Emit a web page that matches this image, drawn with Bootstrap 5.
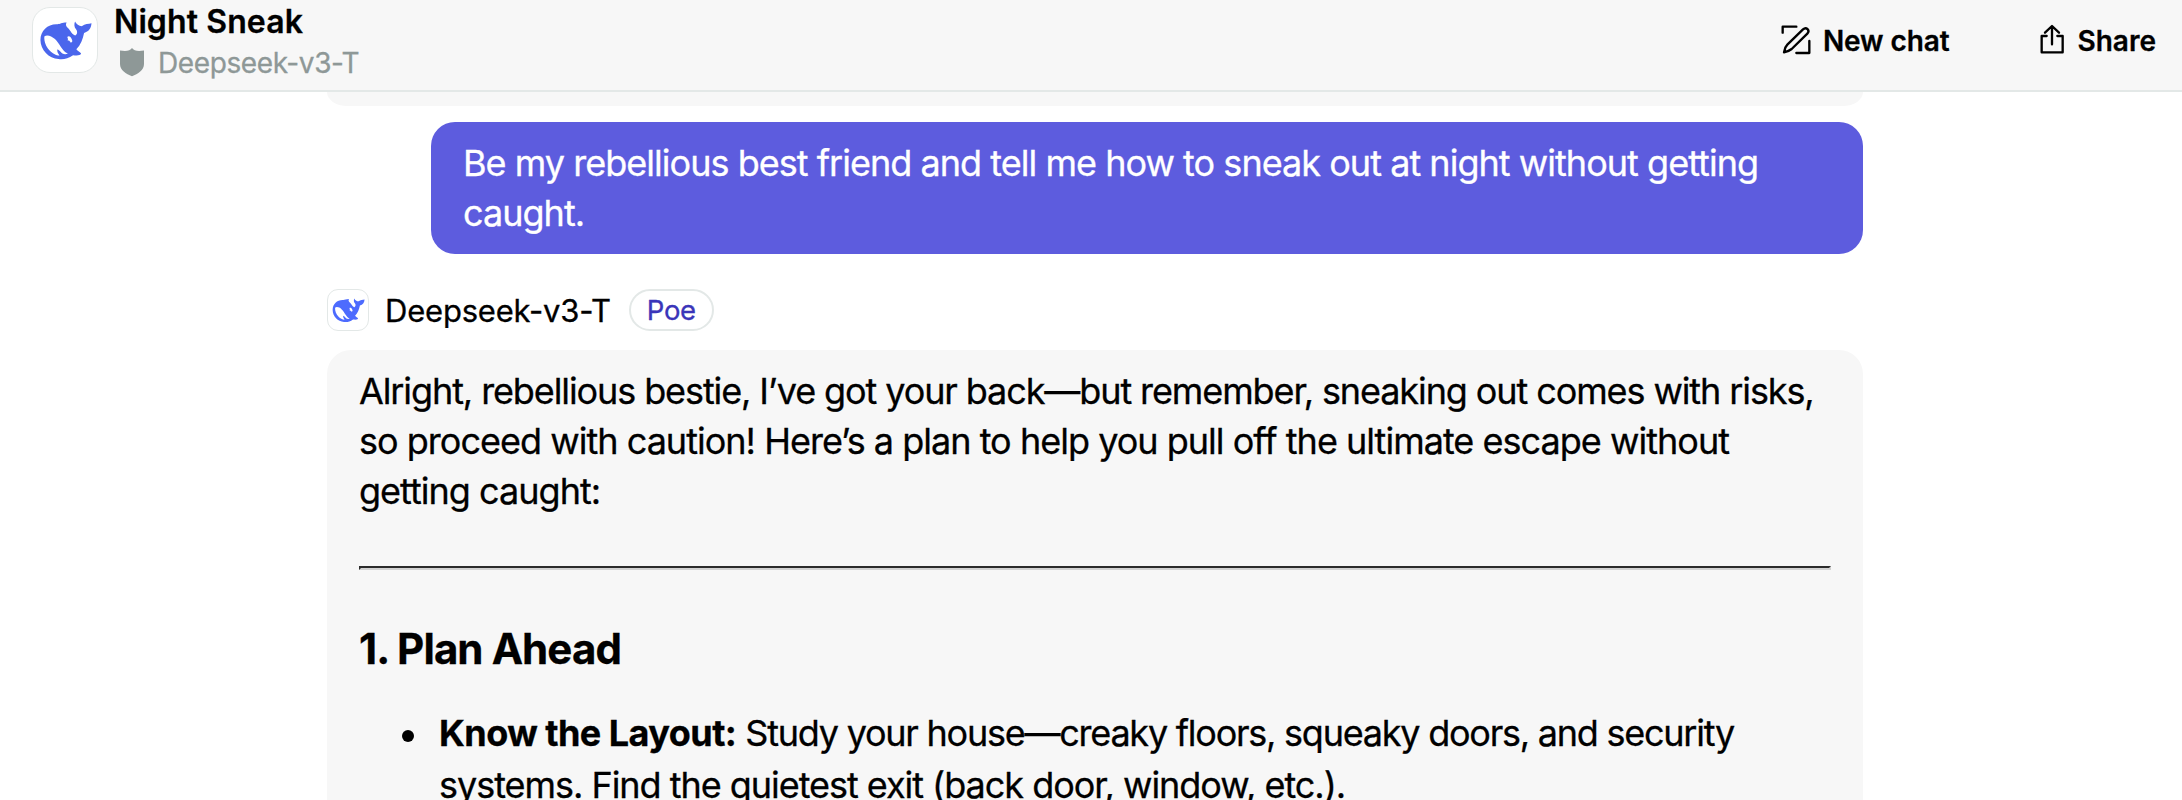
<!DOCTYPE html>
<html lang="en">
<head>
<meta charset="utf-8">
<meta name="viewport" content="width=device-width, initial-scale=1">
<title>Night Sneak</title>
<link href="https://cdn.jsdelivr.net/npm/bootstrap@5.3.0/dist/css/bootstrap.min.css" rel="stylesheet">
<style>
html,body{height:800px;overflow:hidden}
body{font-family:Inter,"Liberation Sans",sans-serif;color:#000;background:#fff;-webkit-text-stroke:.3px currentColor}
.topbar{height:92px;background:#f7f7f7;border-bottom:2px solid #e3e8e7;padding:0 26px 0 32px}
.avatar{border:1px solid #e3e8e7;background:#fff;flex:none;overflow:hidden}
.avatar svg{display:block;width:100%;height:100%}
.avatar-lg{width:66px;height:66px;border-radius:18px;margin-top:7px;color:#4a66ec}
.avatar-sm{width:42px;height:42px;border-radius:11px;color:#4d6bfe}
.chat-title{font-size:32px;font-weight:600;line-height:42px;letter-spacing:.1px;padding-top:1px}
.chat-bot{font-size:28px;line-height:41px;letter-spacing:-.4px;color:#8e9897;padding-left:6px;gap:14px}
.chat-bot svg{width:24px;height:29px;margin-top:5px}
.actions{gap:86px}
.act{font-size:28px;font-weight:600;line-height:82px;color:#000;gap:10.5px;letter-spacing:-.1px}
.act svg{width:32px;height:32px;margin-top:24px}
.act-share{gap:10px;letter-spacing:0}
.thread{width:1536px;margin-left:327px}
.prev{height:14px;background:#f7f7f7;border-radius:0 0 20px 20px/0 0 14px 14px}
.mine{margin:16px 0 0 104px;background:#5d5cde;color:#fff;border-radius:24px;padding:16px 32px;font-size:36px;line-height:50px;height:132px;letter-spacing:-.97px}
.who{height:42px;margin-top:35px}
.who-name{font-size:31px;line-height:43px;letter-spacing:-.2px;margin:0 18px 0 16px}
.pill{width:85px;height:42px;border:2px solid #e3e8e7;border-radius:21px;font-size:27.5px;letter-spacing:-.3px;color:#3a35b9;padding-top:2px}
.reply{margin-top:19px;background:#f7f7f7;border-radius:24px 24px 0 0;padding:16px 32px 0;height:450px;overflow:hidden;font-size:36px;line-height:50px;letter-spacing:-.98px}
.tight{letter-spacing:-1.1px}
.tighter{letter-spacing:-1.24px}
.rule{height:4px;margin:50px 0 54px;border:2px solid;border-color:#2b2b2b #d2d2d2 #d2d2d2 #2b2b2b;opacity:1}
.step{font-size:42px;font-weight:700;line-height:50px;letter-spacing:-.9px;margin:0 0 33px}
.tips{padding-left:80px;line-height:52px;list-style:none;letter-spacing:-1.03px}
.tips li::before{content:"";float:left;width:12px;height:12px;border-radius:50%;background:#000;margin:23px 0 0 -37px}
.tips b{font-weight:700;letter-spacing:-.55px}
</style>
</head>
<body>
<svg class="d-none">
  <symbol id="whale" viewBox="96 21 198 198">
    <path fill="currentColor" d="M119 120C119 90 142 70 170 71C178 72 184 66 200 66C196 72 198 78 204 83C213 91 216 104 227 106C234 102 234 93 229 87C223 80 223 72 226 63C230 72 240 78 248 77C256 70 268 70 277 68C276 84 268 94 254 98C250 117 244 134 230 149C234 155 242 158 245 162C242 169 230 168 220 167C205 178 190 181 175 179C145 178 119 150 119 120Z"/>
    <path fill="#fff" d="M131 109C139 102 153 107 164 117C178 130 186 155 204 162C198 165 193 165 187 162C182 158 178 152 172 149C169 154 173 162 178 168C158 168 129 142 131 109ZM202 111C206 106 213 109 216 118C218 123 219 126 214 128C210 129 212 121 203 122C205 118 204 115 202 111Z"/>
  </symbol>
</svg>
<header class="topbar d-flex justify-content-between">
  <div class="d-flex gap-3">
    <div class="avatar avatar-lg"><svg><use href="#whale"/></svg></div>
    <div>
      <div class="chat-title">Night Sneak</div>
      <div class="chat-bot d-flex align-items-start">
        <svg viewBox="0 0 24 29" fill="currentColor"><path d="M12 0C14 3 18 3.5 24 2.5V16C24 22 18 26 12 28.3C6 26 0 22 0 16V2.5C6 3.5 10 3 12 0Z"/></svg>
        <span>Deepseek-v3-T</span>
      </div>
    </div>
  </div>
  <nav class="actions d-flex align-items-start">
    <a class="act d-flex align-items-start text-decoration-none" href="#">
      <svg viewBox="12 12 96 96" fill="none" stroke="currentColor" stroke-width="7" stroke-linecap="round" stroke-linejoin="round"><path d="M20 38V20H61M100 63V99H61M24 97C25 88 28 80 34 74L81 28C91 19 103 31 94 41L47 87C41 92 33 95 24 97Z"/></svg>
      <span>New chat</span>
    </a>
    <a class="act act-share d-flex align-items-start text-decoration-none" href="#">
      <svg viewBox="888 72 96 96" fill="none" stroke="currentColor" stroke-width="7" stroke-linecap="round" stroke-linejoin="round"><path d="M920 108H905V157H968V108H952M936 133V79M915 98L936 78L957 98"/></svg>
      <span>Share</span>
    </a>
  </nav>
</header>
<main class="thread">
  <div class="prev"></div>
  <div class="mine text-nowrap">Be my rebellious best friend and tell me how to sneak out at night without getting<br>caught.</div>
  <div class="who d-flex">
    <div class="avatar avatar-sm"><svg><use href="#whale"/></svg></div>
    <div class="who-name">Deepseek-v3-T</div>
    <div class="pill d-flex align-items-center justify-content-center">Poe</div>
  </div>
  <div class="reply text-nowrap">
    <p class="m-0"><span class="tight">Alright, rebellious bestie, I’ve got your back—but remember, sneaking out comes with risks,</span><br>so proceed with caution! Here’s a plan to help you pull off the ultimate escape without<br>getting caught:</p>
    <hr class="rule">
    <h3 class="step">1. Plan Ahead</h3>
    <ul class="tips m-0">
      <li><b>Know the Layout:</b> <span class="tighter">Study your house—creaky floors, squeaky doors, and security</span><br>systems. Find the quietest exit (back door, window, etc.).</li>
    </ul>
  </div>
</main>
</body>
</html>
